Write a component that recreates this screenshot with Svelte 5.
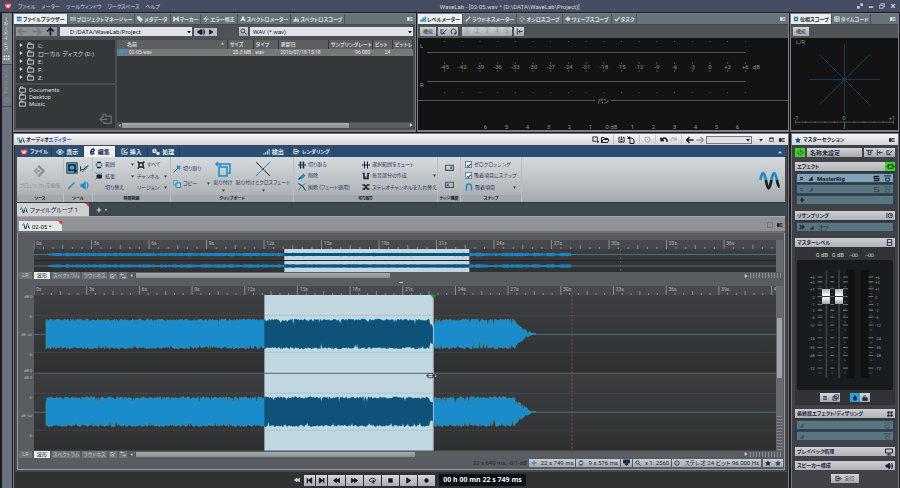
<script lang="ts">
  type Part = { d: string; c?: string; f?: string; w?: number };

  const BLUE = "#1a8ccc";
  const INK = "#1b1f24";

  const icons: Record<string, Part[]> = {
    logo: [
      { d: "M1 2 15 1 13 14 3 15Z", c: "none", f: "#c9283c" },
      { d: "M3 5l3 6 2-6 2 6 3-7", c: "#fff", w: 2 },
    ],
    bars: [{ d: "M2 3.5h13M2 8h13M2 12.5h13", c: "#1b6f9c", w: 3 }],
    grid: [{ d: "M1 4.5h14M1 10.5h14", w: 4 }, { d: "M5.5 1v14M10.5 1v14", c: "#5d676f", w: 1.5 }],
    tag: [{ d: "M1 2h6l8 7-5 6-9-8Z", f: "currentColor" }],
    marker: [{ d: "M2 1v14M14 1v14", w: 3 }, { d: "M3 3l5 5-5 5ZM13 3 8 8l5 5Z", f: "currentColor" }],
    bolt: [{ d: "M10 0 4 8h7L6 16M1 8h14" }],
    peak: [{ d: "M2 14 8 2l6 12M5 12l3-7 3 7", w: 3 }],
    columns: [{ d: "M3 15V8M7 15V3M11 15V6M15 15V9", w: 3 }],
    signal: [{ d: "M2 15v-3M6 15V9M10 15V6M14 15V2" }],
    blueColumns: [{ d: "M2 15v-5M6 15V7M10 15V4M14 15V1", c: "#1b7fb4", w: 3 }],
    pen: [{ d: "M2 14 12 4M11 2l3 3", w: 3 }],
    scope: [{ d: "M8 1v4M8 11v4M1 8h4M11 8h4", w: 3 }],
    wavescope: [{ d: "M1 8h14M5 4v8M8 2v12M11 4v8", w: 3 }],
    check: [{ d: "M2 8l4 5 9-11", w: 3 }],
    phase: [{ d: "M4 2 8 5 12 2M14 4l-3 4 3 4M12 14l-4-3-4 3M2 12l3-4-3-4", c: "#1b6f9c", w: 3 }],
    clock: [{ d: "M2 2h12v12H2ZM2 6h12M2 10h12M6 2v12" }],
    menu: [{ d: "M1 4h5v8H1Z", f: "currentColor" }, { d: "M8 4h7M8 8h7M8 12h7" }],
    back: [{ d: "M15 8H2M7 2 1 8l6 6", w: 3 }],
    forward: [{ d: "M1 8h13M9 2l6 6-6 6", w: 3 }],
    up: [{ d: "M8 15V2M2 8l6-6 6 6", w: 3 }],
    speaker: [{ d: "M2 6h3l4-4v12L5 10H2Z", f: "currentColor" }, { d: "M11 5q3 3 0 6M13 2q5 6 0 12" }],
    play: [{ d: "M4 2 13 8 4 14Z", f: "currentColor" }],
    search: [{ d: "M11 6.5a4.500 4.500 0 1 1-9 0a4.500 4.500 0 1 1 9 0M10 10l5 5" }],
    folder: [{ d: "M1 5h14v9H1ZM3 5V2h5l2 3" }],
    folderBack: [{ d: "M5 7V3h3l1 2h6v9H6v-2M10 9H1M4 6 1 9l3 3", w: 1.5 }],
    wave: [
      { d: "M1 8Q3-2 5 8M9 8q2-10 4 0", c: BLUE },
      { d: "M5 8q2 12 4 0M13 8q1 5 2 5", c: INK },
    ],
    fileWave: [{ d: "M1 12Q2 0 5 6t3 4q1-9 4-8t3 12", c: "#2a9adf", w: 3 }],
    eye: [{ d: "M1 8q7-9 14 0q-7 9-14 0" }, { d: "M6 8a2 2 0 1 0 4 0a2 2 0 1 0-4 0", f: "currentColor" }],
    edit: [{ d: "M4 9q9 0 8-5-2-4-7 1-3 9 1 9 3 0 6-3", w: 3 }],
    insert: [{ d: "M8 2H2v12h12V8M15 1 7 9M7 4v6h6" }],
    gears: [
      { d: "M2 6a3 3 0 1 0 6 0a3 3 0 1 0-6 0", w: 3 },
      { d: "M10 11a2 2 0 1 0 4 0a2 2 0 1 0-4 0", w: 3 },
    ],
    render: [{ d: "M2 3h7l5 5-5 5H2Z" }, { d: "M4 8h8", w: 3 }],
    source: [{ d: "M7 1 5 3l5 5-5 5 2 2 7-7Z", c: "none", f: "currentColor" }, { d: "M5 5 2 8l3 3M5 8h3" }],
    select: [{ d: "M1 1h14v14H1Z", c: INK, f: "#4aa5dc", w: 1 }, { d: "M4 4h8v7H4ZM11 14l3-3", c: INK }],
    envelope: [{ d: "M1 4v9M1 11q6-1 8-4t6-4", c: "#2c3f50" }, { d: "M4 14l9-8", c: BLUE }],
    pencil: [{ d: "M2 14 13 3", c: BLUE, w: 3 }, { d: "M1 15l3-3", c: INK }],
    listen: [{ d: "M2 6h3l4-4v12L5 10H2Z", c: BLUE, f: BLUE }, { d: "M12 3q4 5 0 10", c: BLUE }],
    range: [{ d: "M4 3h8M4 13h8", c: INK, w: 3 }, { d: "M3 5v6M13 5v6", c: BLUE, w: 3 }],
    extend: [{ d: "M4 6h9v6H4Z", c: INK, f: INK }, { d: "M1 1l4 4M15 1l-4 4M1 15l4-4M8 1v3", c: BLUE }],
    all: [{ d: "M4 4h8v8H4Z", c: INK, w: 3 }, { d: "M1 2h3M12 2h3M1 14h3M12 14h3", c: INK, w: 3 }],
    knife: [{ d: "M1 15 10 6", c: "#2b6f9b" }, { d: "M8 2l6 6M10 6l4-4", c: BLUE, w: 4 }],
    copy: [{ d: "M1 1h8v9H1Z", c: "#5a9fc4" }, { d: "M6 6h9v9H6Z", c: BLUE, f: "#c7ced1" }],
    paste: [{ d: "M5 5V3h10v9h-2M3 1 1 3l2 2M1 3h5", c: BLUE, w: 1.5 }, { d: "M4 6h8v9H4Z", c: BLUE, w: 1.5 }],
    cross: [{ d: "M1 1 15 15", c: INK, w: 1 }, { d: "M15 1 8 8M1 15l7-7", c: BLUE, w: 1 }, { d: "M8 8l7-7", c: BLUE, w: 1 }],
    crossSmall: [{ d: "M1 1q10 4 14 14", c: INK }, { d: "M15 1Q5 5 1 15", c: BLUE }],
    trim: [{ d: "M5 1v14M11 1v14", c: INK, w: 3 }, { d: "M0 8h5M11 8h5", c: BLUE, w: 4 }, { d: "M5 8h6", c: INK }],
    eraser: [{ d: "M5 13 13 5", c: BLUE, w: 6 }, { d: "M1 15l4-4", c: "#0f5279", w: 3 }],
    mute: [{ d: "M5 1v14M11 1v14M0 8h16", c: INK }, { d: "M6 8h4", c: BLUE, w: 4 }],
    silence: [{ d: "M1 3h3v10h8V3h3", c: INK, w: 3 }, { d: "M6 10h4", c: BLUE, w: 3 }],
    swap: [{ d: "M1 4h4l6 8h4M1 12h4l2-3M9 6l2-2h4", c: INK, w: 3 }],
    nudgeRight: [{ d: "M1 4h14v9H1Z", c: "#50575d" }, { d: "M10 7h2v3h-2Z", c: BLUE, f: BLUE }],
    nudgeLeft: [{ d: "M1 4h14v9H1Z", c: "#50575d" }, { d: "M4 7h2v3H4Z", c: BLUE, f: BLUE }],
    magnet: [{ d: "M3 15V8q0-6 5-6t5 6v7", c: BLUE, w: 3 }],
    newFile: [{ d: "M2 2h10v9M9 12H2V2M13 10v6M10 13h6" }],
    open: [{ d: "M1 13V3h5l1 2h6v2M1 13l3-6h12l-3 6Z" }],
    save: [{ d: "M2 3h3M11 3h3v11H2V3M8 1v8M5 6l3 3 3-3M5 12h6" }],
    saveAs: [{ d: "M6 4h4l4 4v7H6ZM1 1l4 4M5 1v4H1" }],
    disc: [{ d: "M2 8a6 6 0 1 0 12 0a6 6 0 1 0-12 0M7 8h2" }],
    undo: [{ d: "M2 3v6h6M3 8q6-8 11 0v4", w: 3 }],
    redo: [{ d: "M14 3v6H8M13 8Q7 0 2 8v4", w: 2 }],
    down: [{ d: "M3 5h10L8 12Z", c: "none", f: "currentColor" }],
    rollup: [{ d: "M3 11h10L8 5Z", c: "none", f: "currentColor" }],
    box: [{ d: "M2 3h12v11H2Z" }, { d: "M2 4h12", w: 3 }],
    minimise: [{ d: "M2 11h12", w: 4 }],
    restore: [{ d: "M5 5V2h10v8h-3M1 6h10v8H1Z" }],
    close: [{ d: "M3 3l10 10M13 3 3 13", w: 3 }],
    expand: [{ d: "M10 2h5v5h-5ZM1 9h5v5H1Z", f: "currentColor" }],
    star: [{ d: "M8 0l2 5 6 1-4 4 1 6-5-3-5 3 1-6-4-4 6-1Z", c: "none", f: "currentColor" }],
    blueStar: [{ d: "M8 0l2 5 6 1-4 4 1 6-5-3-5 3 1-6-4-4 6-1Z", c: "none", f: "#16507c" }],
    power: [{ d: "M8 1v7M4 4q-4 5 0 8 4 3 8 0 4-3 0-8" }],
    reset: [{ d: "M5 14Q0 9 4 4t9 1q3 4-1 9M9 13l4 1 1-4" }],
    bypass: [{ d: "M0 3h16M5 7h6v6H5ZM2 3l4 4M14 3l-4 4" }],
    bypassBox: [{ d: "M0 2h16M4 7h8v7H4Z" }],
    insertPoint: [{ d: "M3 1v14M15 8H6M10 4 6 8l4 4" }],
    options: [{ d: "M11 13H2V4h6M5 8l3 3 7-8" }],
    loopFx: [{ d: "M0 8h4M12 8h4M4 5h8v6H4Z" }],
    equals: [{ d: "M3 5h10M3 11h10", w: 3 }],
    ramp: [{ d: "M1 15 15 1v14Z", c: "none", f: "currentColor" }],
    solo: [{ d: "M14 3H3v5h10v5H2", w: 3 }],
    plus: [{ d: "M8 2v12M2 8h12", w: 3 }],
    resample: [{ d: "M1 3h4l4 5-4 5H1l4-5ZM8 3h3l4 5-4 5H8", f: "currentColor" }],
    timer: [{ d: "M2 2v12M5 8a5 5 0 1 0 10 0a5 5 0 1 0-10 0M10 5v3h3" }],
    linkH: [{ d: "M3 1h10v14H3ZM3 8h10" }],
    windows: [{ d: "M6 2h9v8H6ZM2 6h9v8H2Z" }],
    flame: [{ d: "M8 1q8 8 3 13H5Q0 9 8 1", f: "currentColor" }],
    lock: [{ d: "M2 7h12v8H2Z", f: "currentColor" }, { d: "M5 7V2h5" }],
    four: [{ d: "M2 2h4v4H2ZM10 2h4v4h-4ZM2 10h4v4H2ZM10 10h4v4h-4Z", f: "currentColor" }],
    screen: [{ d: "M1 2h14v8H1ZM8 10v4M4 14h8" }],
    toStart: [{ d: "M3 2v12", w: 3 }, { d: "M13 2 5 8l8 6Z", f: "currentColor" }],
    toEnd: [{ d: "M13 2v12", w: 3 }, { d: "M3 2l8 6-8 6Z", f: "currentColor" }],
    rewind: [{ d: "M8 3 1 8l7 5ZM15 3 8 8l7 5Z", f: "currentColor" }],
    fast: [{ d: "M1 3l7 5-7 5ZM8 3l7 5-7 5Z", f: "currentColor" }],
    loop: [{ d: "M4 11Q0 10 1 7q1-4 7-4t7 4q0 4-5 4M10 7v8l-4-4Z" }],
    stop: [{ d: "M3 3h10v10H3Z", c: "none", f: "currentColor" }],
    record: [{ d: "M3 8a5 5 0 1 0 10 0a5 5 0 1 0-10 0", c: "none", f: "currentColor" }],
    caret: [{ d: "M8 1v14M1 8h14", c: BLUE, w: 3 }],
    ring: [{ d: "M4 3h8M4 13h8", c: "#234", w: 3 }, { d: "M3 4v8M13 4v8", c: BLUE, w: 3 }],
    screenDown: [{ d: "M1 2h14v7H1ZM4 11h8l-4 4Z", f: "currentColor" }],
    updown: [{ d: "M1 4h9M4 1 1 4l3 3M15 12H6M12 9l3 3-3 3" }],
    left: [{ d: "M11 3v10L5 8Z", c: "none", f: "currentColor" }],
  };

  const fileTabs = [
    ["bars", "ファイルブラウザー"],
    ["grid", "プロジェクトマネージャー"],
    ["tag", "メタデータ"],
    ["marker", "マーカー"],
    ["bolt", "エラー修正"],
    ["peak", "スペクトロメーター"],
    ["columns", "スペクトロスコープ"],
  ];
  const meterTabs = [
    ["blueColumns", "レベルメーター"],
    ["pen", "ラウドネスメーター"],
    ["scope", "オシロスコープ"],
    ["wavescope", "ウェーブスコープ"],
    ["check", "タスク"],
  ];
  const scopeTabs = [
    ["phase", "位相スコープ"],
    ["clock", "タイムコード"],
  ];

  const drives = ["C:", "ローカル ディスク (D:)", "E:", "F:", "Z:"];
  const places = ["Documents", "Desktop", "Music"];
  const levels = Array.from({ length: 18 }, (_, i) => i * 3 - 45);
  const pans = [6, 5, 4, 3, 2, 1, 0, 1, 2, 3, 4, 5, 6];

  const CENTERS = [39, 117];

  function makeNoise(seed: number) {
    let s = seed;
    return () => {
      s = (s * 16807) % 2147483647;
      return s / 2147483647;
    };
  }

  // level of the clip at a pixel of the track
  function envelope(x: number) {
    if (x > 482) return Math.max(0.3, 13 * Math.pow((503 - x) / 21, 1.3));
    if (x > 396 && x < 402) return 10;
    return 15;
  }

  function wavePath(center: number, from: number, to: number, seed: number) {
    const rnd = makeNoise(seed);
    const top: string[] = [];
    const bottom: string[] = [];
    for (let x = 12; x <= 503; x++) {
      const deep = x > 400 ? 9 : 5;
      const chance = x > 400 ? 0.14 : 0.1;
      const env = envelope(x);
      const dip = rnd() < chance ? rnd() * deep : 0;
      const dip2 = rnd() < chance ? rnd() * deep : 0;
      const a = Math.max(0.3, env - dip - rnd() * 2);
      const b = Math.max(0.3, env - dip2 - rnd() * 2);
      if (x < from || x > to) continue;
      top.push(`${x} ${(center - a).toFixed(1)}`);
      bottom.unshift(`${x} ${(center + b).toFixed(1)}`);
    }
    return `M${top.join("L")}L${bottom.join("L")}Z`;
  }

  const waves = CENTERS.map((c, i) => ({
    full: wavePath(c, 12, 503, 77 + i * 5),
    selected: wavePath(c, 231, 400, 77 + i * 5),
  }));

  function thinPath(center: number) {
    const rnd = makeNoise(31);
    let top = "";
    let bottom = "";
    for (let x = 15; x < 544; x += 2) {
      const a = 1 + rnd() * 0.8;
      top += `L${x} ${(center - a).toFixed(1)}`;
      bottom = `L${x} ${(center + a).toFixed(1)}` + bottom;
    }
    return `M14 ${center}${top}${bottom}Z`;
  }

  const dbMarks: [string, number][] = [
    ["dB 0", 2],
    ["-6", 14],
    ["dB -∞", 25],
    ["-6", 37],
    ["dB 0", 47],
    ["dB 0", 51],
    ["-6", 63],
    ["dB -∞", 74],
    ["-6", 86],
    ["dB 0", 97],
  ];

  const faderMarks: [string, number][] = [
    ["+6", 16], ["+3", 21], ["+1", 28], ["0", 36], ["-1", 44], ["-2", 50], ["-6", 57],
    ["-12", 65], ["-24", 78], ["-36", 88], ["-48", 96], ["-72", 109],
  ];

  const transport = ["toStart", "toEnd", "rewind", "fast", "loop", "stop", "play", "record"];

  let leftGain = $state(79);
  let rightGain = $state(79);
  let zeroCross = $state(true);
  let snapItems = $state(true);
</script>

{#snippet icon(name: string, size = 7)}
  <svg class="icon" width={size} height={size} viewBox="0 0 16 16" aria-hidden="true">
    {#each icons[name] as p}
      <path d={p.d} stroke={p.c ?? "currentColor"} fill={p.f ?? "none"} stroke-width={p.w ?? 2} />
    {/each}
  </svg>
{/snippet}

{#snippet tabs(items: string[][])}
  <nav class="tabs">
    {#each items as [name, label], i}
      <button class="tab" class:active={i === 0}>{@render icon(name, 6)}{label}</button>
    {/each}
    <button class="corner" aria-label="menu">{@render icon("menu", 6)}</button>
  </nav>
{/snippet}

{#snippet ruler(step: number, count: number)}
  <svg class="ruler">
    {#each Array(count * 6) as _, i}
      <line
        x1="{(i * step) / 6}%" x2="{(i * step) / 6}%"
        y1={i % 6 === 0 ? 0 : i % 3 === 0 ? 5 : 7} y2="9"
      />
    {/each}
    {#each Array(count) as _, i}
      <text x="{i * step + 0.3}%" y="5">{i * 3}s</text>
    {/each}
  </svg>
{/snippet}

{#snippet viewBar(thumb: number)}
  <div class="view-bar">
    <button class="view lr">LR</button>
    <button class="view on">波形</button>
    <button class="view">スペクトラム</button>
    <button class="view">ラウドネス</button>
    <button class="view" aria-label="options">{@render icon("options", 6)}</button>
    <button class="view" aria-label="channels">{@render icon("updown", 6)}</button>
    {@render icon("left", 5)}
    <div class="h-track"><div class="h-thumb" style="width: {thumb}%"></div></div>
    {@render icon("play", 4)}
    <div class="wheel"></div>
  </div>
{/snippet}

<div class="app">
  <header class="title-bar">
    {@render icon("logo", 8)}
    <nav>
      {#each ["ファイル", "メーター", "ツールウィンドウ", "ワークスペース", "ヘルプ"] as item}
        <button>{item}</button>
      {/each}
    </nav>
    <h1>WaveLab - [02-05.wav * (D:\DATA\WaveLab\Project)]</h1>
    <div class="window-buttons">
      {#each ["expand", "minimise", "restore", "close"] as name}
        <button aria-label={name}>{@render icon(name, 6)}</button>
      {/each}
    </div>
  </header>

  <aside class="rail">
    <button class="rail-tab lit">{@render icon("grid", 7)}ビットメーター</button>
    <button class="rail-tab">{@render icon("disc", 6)}プラグイン</button>
  </aside>

  <div class="tools">
    <section class="panel">
      {@render tabs(fileTabs)}
      <div class="tool-row browser-row">
        <div class="history">
          <button class="dim" aria-label="back">{@render icon("back", 9)}</button>
          <button class="dim" aria-label="forward">{@render icon("forward", 9)}</button>
          <button aria-label="up">{@render icon("up", 9)}</button>
        </div>
        <div class="combo path">
          <select aria-label="folder"><option>D:/DATA/WaveLab/Project</option></select>
          {@render icon("down", 6)}
        </div>
        <div class="listen">
          <button aria-label="listen">{@render icon("speaker", 8)}</button>
          <button aria-label="play">{@render icon("play", 6)}</button>
        </div>
        <button class="light search" aria-label="search">{@render icon("search", 7)}</button>
        <div class="combo filter">
          <select aria-label="file type"><option>WAV (*.wav)</option></select>
          {@render icon("down", 6)}
        </div>
      </div>
      <div class="browser">
        <div class="trees">
          <ul class="tree">
            {#each drives as drive}
              <li>{@render icon("play", 4)}{@render icon("folder", 7)}{drive}</li>
            {/each}
          </ul>
          <div class="places">
            <ul class="tree">
              {#each places as place}
                <li>{@render icon("folder", 7)}{place}</li>
              {/each}
            </ul>
            <button class="go-back" aria-label="parent folder">{@render icon("folderBack", 13)}</button>
          </div>
        </div>
        <div class="files">
          <table>
            <thead>
              <tr>
                <th class="name">名前 {@render icon("rollup", 5)}</th>
                <th class="size">サイズ</th>
                <th class="type">タイプ</th>
                <th class="date">更新日</th>
                <th class="rate">サンプリングレート</th>
                <th class="bit">ビット</th>
                <th class="bit">ビットレ</th>
              </tr>
            </thead>
            <tbody>
              <tr>
                <td class="first">{@render icon("fileWave", 7)}02-05.wav</td>
                <td class="num">20.3 MB</td>
                <td>wav</td>
                <td>2016/07/18 15:18</td>
                <td class="num">96 000</td>
                <td class="num">24</td>
                <td></td>
              </tr>
            </tbody>
          </table>
          <div class="file-scroll">
            {@render icon("left", 5)}
            <div class="h-track"><div class="h-thumb" style="width: 79%"></div></div>
            {@render icon("play", 4)}
          </div>
        </div>
      </div>
    </section>

    <section class="panel">
      {@render tabs(meterTabs)}
      <div class="tool-row">
        <button class="light">機能</button>
        <div class="cluster">
          <button class="light" aria-label="options">{@render icon("options", 7)}</button>
          <button class="light" aria-label="reset">{@render icon("reset", 7)}</button>
        </div>
        <div class="cluster presets">
          {#each ["①", "②", "③", "④", "⑤"] as preset}
            <button class="light" disabled>{preset}</button>
          {/each}
          <button class="light" aria-label="insert point">{@render icon("insertPoint", 7)}</button>
        </div>
      </div>
      <svg class="scope-view">
        <text x="2" y="10">L</text>
        <text x="2" y="49">R</text>
        <line x1="2.500%" x2="88.500%" y1="14.500" y2="14.500" />
        <line x1="2.500%" x2="88.500%" y1="43.500" y2="43.500" />
        <line x1="0" x2="48%" y1="62.500" y2="62.500" />
        <line x1="52%" x2="100%" y1="62.500" y2="62.500" />
        {#each levels as level, i}
          {@const x = `${7.2 + i * 4.780}%`}
          <g class="ticks">
            <line x1={x} x2={x} y1="3" y2="4" />
            <line x1={x} x2={x} y1="24" y2="26" />
            <line x1={x} x2={x} y1="32" y2="34" />
            <line x1={x} x2={x} y1="54" y2="55" />
          </g>
          <text class="mid" {x} y="31">{level > 0 ? `+${level}` : level}</text>
        {/each}
        <text x="90.500%" y="31">dB</text>
        <text class="mid pan" x="50%" y="65">パン</text>
        {#each pans as pan, i}
          <text class="mid" x="{18.2 + i * 5.680}%" y="91">{pan === 0 ? "0 dB" : pan}</text>
        {/each}
      </svg>
    </section>

    <section class="panel">
      {@render tabs(scopeTabs)}
      <div class="tool-row"><button class="light">機能</button></div>
      <svg class="scope-view" viewBox="0 0 107 94">
        <text x="4" y="6">L/R</text>
        <g class="cross">
          <path d="M53.500 6v72M17 42.500h73M28 17l51 51M79 17 28 68" />
        </g>
        <text class="mid" x="4" y="84">-1</text>
        <text class="mid" x="53" y="84">0</text>
        <text class="mid" x="102" y="84">+1</text>
        <path class="scale" d="M3 86h101M3.500 84v4M13.500 85v2M23.500 85v2M33.500 85v2M43.500 85v2M63.500 85v2M73.500 85v2M83.500 85v2M93.500 85v2M103.500 84v4" />
        <path d="M53.500 86v7" stroke="#0f9a12" />
      </svg>
    </section>
  </div>

  <main class="editor">
    <div class="editor-title">
      {@render icon("wave", 8)}<h2>オーディオ<span>エディター</span></h2>
      <div class="actions">
        <button aria-label="new">{@render icon("newFile", 7)}</button>
        <button aria-label="open">{@render icon("open", 8)}</button>
        <i></i>
        <button aria-label="save">{@render icon("save", 7)}</button>
        <button aria-label="save as">{@render icon("saveAs", 8)}</button>
        <i></i>
        <button class="dim" aria-label="disc">{@render icon("disc", 7)}</button>
        <i></i>
        <button aria-label="undo">{@render icon("undo", 8)}</button>
        <button class="dim" aria-label="redo">{@render icon("redo", 7)}</button>
        <i></i>
        <button aria-label="previous">{@render icon("back", 8)}</button>
        <button class="dim" aria-label="next">{@render icon("forward", 8)}</button>
      </div>
      <div class="combo jump">
        <select aria-label="history"><option></option></select>
        {@render icon("down", 6)}
      </div>
      <div class="layout">
        <button aria-label="more">{@render icon("down", 6)}</button>
        <button aria-label="maximise">{@render icon("box", 5)}</button>
        <button aria-label="menu">{@render icon("menu", 6)}</button>
      </div>
    </div>

    <div class="frame">
      <nav class="ribbon-tabs">
        <button>{@render icon("logo", 8)}ファイル</button>
        <button>{@render icon("eye", 8)}表示</button>
        <button class="active">{@render icon("edit", 7)}編集</button>
        <button>{@render icon("insert", 7)}挿入</button>
        <button>{@render icon("gears", 8)}処理</button>
        <button class="detect">{@render icon("signal", 7)}検出</button>
        <button>{@render icon("render", 7)}レンダリング</button>
        <button class="fold" aria-label="fold">{@render icon("rollup", 6)}</button>
      </nav>

      <div class="ribbon">
        <section>
          <div class="body big off">
            <button>{@render icon("source", 14)}プロジェクトを編集</button>
          </div>
          <h3>ソース</h3>
        </section>
        <section>
          <div class="body two-col">
            <button aria-label="select">{@render icon("select", 12)}</button>
            <button aria-label="envelope">{@render icon("envelope", 9)}</button>
            <button aria-label="pencil">{@render icon("pencil", 8)}</button>
            <button aria-label="listen">{@render icon("listen", 9)}</button>
          </div>
          <h3>ツール</h3>
        </section>
        <section>
          <div class="body range">
            <button>{@render icon("range", 8)}範囲</button>
            <button>{@render icon("down", 5)}{@render icon("all", 8)}すべて</button>
            <button>{@render icon("extend", 8)}拡張</button>
            <button>{@render icon("down", 5)}チャンネル<b>{@render icon("down", 5)}</b></button>
            <button class="inset">切り替え</button>
            <button class="inset-less">リージョン<b>{@render icon("down", 5)}</b></button>
          </div>
          <h3>時間範囲</h3>
        </section>
        <section>
          <div class="body clip">
            <div class="stack">
              <button>{@render icon("knife", 8)}切り取り</button>
              <button>{@render icon("copy", 8)}コピー<b>{@render icon("down", 5)}</b></button>
            </div>
            <button class="tall">{@render icon("paste", 16)}貼り付け{@render icon("down", 5)}</button>
            <button class="tall">{@render icon("cross", 16)}貼り付けとクロスフェード{@render icon("down", 5)}</button>
          </div>
          <h3>クリップボード</h3>
        </section>
        <section>
          <div class="body cutting">
            <button>{@render icon("trim", 8)}切り取る</button>
            <button>{@render icon("mute", 8)}選択範囲をミュート</button>
            <button>{@render icon("eraser", 8)}削除</button>
            <button>{@render icon("silence", 8)}無音部分の作成<b>{@render icon("down", 5)}</b></button>
            <button>{@render icon("crossSmall", 8)}削除 (フェード適用)</button>
            <button>{@render icon("swap", 8)}ステレオチャンネルを入れ替え</button>
          </div>
          <h3>切り取り</h3>
        </section>
        <section>
          <div class="body big nudge">
            <button aria-label="nudge right">{@render icon("nudgeRight", 9)}</button>
            <button aria-label="nudge left">{@render icon("nudgeLeft", 9)}</button>
          </div>
          <h3>ナッジ機能</h3>
        </section>
        <section>
          <div class="body snap">
            <label><input type="checkbox" bind:checked={zeroCross} />ゼロクロッシング</label>
            <label><input type="checkbox" bind:checked={snapItems} />吸着項目にスナップ</label>
            <button>{@render icon("magnet", 8)}吸着項目<b>{@render icon("down", 5)}</b></button>
          </div>
          <h3>スナップ</h3>
        </section>
        <div class="brand">{@render icon("wave", 22)}</div>
      </div>

      <div class="group-row">
        <button class="group-tab">{@render icon("wave", 8)}ファイルグループ 1</button>
        <button class="add">{@render icon("plus", 6)}{@render icon("down", 4)}</button>
      </div>

      <div class="doc-row">
        <button class="doc-tab">{@render icon("wave", 8)}02-05 *</button>
        <div class="doc-tools">
          <button class="square" aria-label="colour"></button>
          <button aria-label="menu">{@render icon("menu", 6)}</button>
        </div>
      </div>

      <div class="montage">
        <div class="overview">
          <div class="gutter"></div>
          <div class="lane">
            {@render ruler(7.750, 13)}
            <svg class="thin" viewBox="0 0 750 23" preserveAspectRatio="none">
              <rect width="750" height="23" fill="url(#lane)" />
              <rect x="253" width="187" height="23" fill="#c1d8e2" />
              <path d="M0 11.500h750" stroke="#222426" />
              <path class="zero" d="M0 5.500h750M0 17h750" />
              <path d={thinPath(5.5) + thinPath(17)} fill="#1b82bb" />
              <path d="M253 5.500h187M253 17h187" stroke="#0f5279" stroke-width="3" />
              <path d="M593 0v23" stroke="#8d4a55" stroke-dasharray="2 2" />
            </svg>
          </div>
          <div class="v-bar"></div>
        </div>
        {@render viewBar(42)}

        <div class="grip"></div>

        <div class="detail">
          <svg class="gutter db">
            {#each dbMarks as [label, y]}
              <text x="14" y="{y}%" dy="9">{label}-</text>
            {/each}
          </svg>
          <div class="lane">
            {@render ruler(7.100, 15)}
            <svg class="wave" viewBox="0 0 744 156" preserveAspectRatio="none">
              <defs>
                <linearGradient id="lane" x2="0" y2="1">
                  <stop offset="0" stop-color="#3d3e41" />
                  <stop offset="1" stop-color="#2f3032" />
                </linearGradient>
              </defs>
              <rect width="744" height="78" fill="url(#lane)" />
              <rect y="78" width="744" height="78" fill="url(#lane)" />
              <rect x="231" width="169" height="156" fill="#c1d8e2" />
              <path d="M0 20.500h744M0 57.500h744M0 98.500h744M0 135.500h744" stroke="#777" stroke-opacity=".2" />
              <path d="M0 78.500h744" stroke="#5c5e61" />
              <path class="zero" d="M0 39.500h744M0 117.500h744" />
              {#each waves as wave}
                <path d={wave.full} fill="#1a8ccc" stroke="#3c93a6" stroke-width=".6" />
                <path d={wave.selected} fill="#0f5279" />
              {/each}
              <path d="M539.500 0v156" stroke="#7c5560" stroke-dasharray="2 2" />
              <path d="M400.500 0v156" stroke="#dfe9ee" stroke-opacity=".6" />
              <path d="M398 0h5l-2.500 4Z" fill="#1da51d" />
              <path d="M393 81h11M402 79l3 2-3 2M395 79h5v4h-5Z" fill="#fff" stroke="#223" stroke-width=".8" />
            </svg>
          </div>
          <div class="v-bar">
            <div class="v-thumb"></div>
            <div class="v-wheel"></div>
          </div>
        </div>
        {@render viewBar(46)}

        <footer class="status">
          <span class="cursor">22 s 640 ms, -0.1 dB</span>
          <div class="chips">
            <button>{@render icon("caret", 6)}<span>22 s 749 ms</span></button>
            <button>{@render icon("ring", 6)}<span>9 s 576 ms</span></button>
            <button aria-label="view">{@render icon("screenDown", 7)}</button>
            <button>{@render icon("search", 6)}<span>x 1: 2560</span></button>
            <button>{@render icon("disc", 6)}<span>ステレオ 24 ビット 96 000 Hz</span></button>
          </div>
          <div class="chips">
            <button aria-label="favourites">{@render icon("star", 6)}{@render icon("blueStar", 6)}</button>
          </div>
        </footer>
      </div>
    </div>

    <div class="transport">
      {@render icon("rewind", 6)}
      <div class="keys">
        {#each transport as name, i}
          <button class:narrow={i < 2} aria-label={name}>{@render icon(name, 7)}</button>
        {/each}
      </div>
      <output>00 h 00 mn 22 s 749 ms</output>
    </div>
  </main>

  <aside class="master">
    <div class="master-title">
      {@render icon("blueStar", 6)}<h2>マスターセクション</h2>{@render icon("menu", 6)}
    </div>
    <div class="preset">
      <button class="green" aria-label="power">{@render icon("power", 7)}</button>
      <button class="light preset-name">名称未設定</button>
      <div class="light trio">
        {@render icon("bypass", 7)}{@render icon("insertPoint", 7)}{@render icon("options", 7)}
      </div>
    </div>

    <h3 class="bar">エフェクト <button class="green" aria-label="effects">{@render icon("loopFx", 9)}</button></h3>
    <div class="slots">
      <div class="slot lit">{@render icon("equals", 5)}{@render icon("ramp", 5)}<b>MasterRig</b>{@render icon("solo", 7)}{@render icon("bypassBox", 7)}</div>
      <div class="slot faint">{@render icon("equals", 5)}{@render icon("ramp", 5)}<b></b>{@render icon("solo", 7)}{@render icon("bypassBox", 7)}</div>
      <div class="slot">{@render icon("plus", 6)}</div>
    </div>

    <h3 class="bar">リサンプリング {@render icon("timer", 7)}</h3>
    <div class="slots">
      <div class="slot off">{@render icon("resample", 6)}{@render icon("ramp", 5)}<span>オフ</span></div>
    </div>

    <h3 class="bar">マスターレベル {@render icon("linkH", 7)}</h3>
    <div class="level">
      <div class="readout"><span>0 dB</span><span>0 dB</span><span>-∞</span><span>-∞</span></div>
      <div class="faders">
        <svg width="98" height="130" viewBox="0 0 98 130">
          <rect x="51" y="9" width="8" height="110" fill="#101112" />
          <rect x="65" y="9" width="8" height="110" fill="#101112" />
          <path d="M30 9v110M43 9v110" stroke="#3a3d40" stroke-width="2" />
          {#each faderMarks as [label, y]}
            <path d="M21 {y}h5M34 {y}h4M47 {y}h5M73 {y}h5" stroke="#74777a" />
            <path d="M22 {y + 5}h3M35 {y + 5}h2M48 {y + 5}h2M74 {y + 5}h3" stroke="#484b4e" />
            <text class="end" x="18" y={y + 2}>{label}</text>
            <text x="80" y={y + 2}>{label}</text>
          {/each}
        </svg>
        <div class="sliders">
          <input type="range" aria-label="left gain" bind:value={leftGain} />
          <input type="range" aria-label="right gain" bind:value={rightGain} />
        </div>
      </div>
      <div class="level-buttons">
        <div class="cluster">
          <button class="light" aria-label="link">{@render icon("equals", 6)}</button>
          <button class="light" aria-label="windows">{@render icon("windows", 7)}</button>
        </div>
        <div class="cluster">
          <button class="light blue" aria-label="clip">{@render icon("flame", 6)}</button>
          <button class="light" aria-label="lock">{@render icon("lock", 6)}</button>
        </div>
      </div>
    </div>

    <h3 class="bar">最終段エフェクト/ディザリング {@render icon("four", 6)}</h3>
    <div class="slots">
      <div class="slot faint">{@render icon("ramp", 5)}<b></b>{@render icon("bypassBox", 7)}</div>
      <div class="slot faint">{@render icon("ramp", 5)}<b></b>{@render icon("bypassBox", 7)}</div>
    </div>
    <h3 class="bar">プレイバック処理 {@render icon("screen", 8)}</h3>
    <h3 class="bar">スピーカー構成 {@render icon("speaker", 8)}</h3>
    <button class="light render">{@render icon("render", 7)}実行</button>
  </aside>
</div>

<style>
  :global(body) {
    margin: 0;
    background: #1d1b28;
  }

  .app {
    display: grid;
    grid-template-columns: 10px 1fr 109px;
    grid-template-rows: 13px 119px 1fr;
    column-gap: 1px;
    min-height: 100vh;
    box-sizing: border-box;
    padding: 0 1px 1px 2px;
    font: 5px/7px Roboto, "Noto Sans CJK JP", sans-serif;
    font-feature-settings: "palt";
    color: #d3d7da;
    white-space: nowrap;
  }

  .icon {
    flex: none;
    display: block;
  }

  button,
  select,
  input {
    display: flex;
    align-items: center;
    justify-content: center;
    gap: 2px;
    margin: 0;
    padding: 0;
    border: 0;
    background: none;
    color: inherit;
    font: inherit;
    font-feature-settings: inherit;
    white-space: nowrap;
  }

  h1,
  h2,
  h3,
  ul {
    margin: 0;
    padding: 0;
    font-size: inherit;
    list-style: none;
  }

  .title-bar {
    grid-column: 1 / -1;
    display: grid;
    grid-template-columns: 14px 4fr auto 3fr;
    align-items: center;
    margin: 0 -1px 1px -2px;
    padding: 0 4px;
    background: #454d62;
    color: #d5d8df;
    font-size: 6px;
  }

  .title-bar nav {
    display: flex;
    gap: 6px;
    font-size: 5px;
  }

  .title-bar h1 {
    font-weight: 400;
  }

  .window-buttons {
    display: flex;
    justify-content: flex-end;
    gap: 5px;
  }

  .rail {
    grid-row: 2 / 4;
    display: flex;
    flex-direction: column;
    gap: 1px;
    background: #69727a;
  }

  .rail-tab {
    writing-mode: vertical-rl;
    transform: rotate(180deg);
    gap: 3px;
    padding: 3px 0;
    border-top: 1px solid #454c52;
    color: #8c949b;
  }

  .rail-tab.lit {
    background: #7a838a;
    color: #e3e6e9;
  }

  .tools {
    grid-column: 2 / 4;
    display: grid;
    grid-template-columns: 403fr 372fr 109px;
    gap: 1px;
  }

  .panel {
    display: flex;
    flex-direction: column;
    min-width: 0;
    overflow: hidden;
    border: 1px solid #7b7f84;
    border-bottom-width: 2px;
    background: #505356;
  }

  .tabs {
    display: flex;
    height: 10px;
    background: #69727a;
    border-bottom: 1px solid #454a4f;
  }

  .tab {
    gap: 1px;
    padding: 0 2px;
    border-right: 1px solid #4c545b;
    color: #dde1e4;
    font-weight: 700;
  }

  .tab.active {
    background: #eceff0;
    color: #20262c;
  }

  .corner {
    margin-left: auto;
    padding-right: 2px;
    color: #dfe3e6;
  }

  .tool-row {
    display: flex;
    align-items: center;
    gap: 2px;
    height: 11px;
    padding: 1px 2px;
  }

  .light {
    min-height: 9px;
    padding: 0 3px;
    background: linear-gradient(#d2d5d8, #a6a9ad);
    color: #272d47;
  }

  .light:disabled {
    color: #85888c;
    font-size: 7px;
  }

  .cluster {
    display: flex;
  }

  .cluster .light {
    width: 10px;
    padding: 0;
  }

  .presets {
    margin-left: 2px;
  }

  .presets .light:last-child {
    margin-left: 2px;
  }

  .history,
  .listen {
    display: flex;
    gap: 5px;
    align-items: center;
    padding: 0 2px;
    background: #8d9194;
    color: #15193a;
  }

  .listen {
    gap: 3px;
    padding: 0 3px;
    background: #b9bcc0;
  }

  .dim {
    color: #75797d;
  }

  .search {
    margin-left: 20px;
    padding: 0 1px;
  }

  .combo {
    display: flex;
    align-items: center;
    height: 9px;
    background: #dfe1e6;
    color: #15193a;
  }

  .combo select {
    flex: 1;
    min-width: 0;
    appearance: none;
    padding-left: 3px;
    font-size: 6px;
    line-height: 9px;
  }

  .path {
    flex: 0 1 132px;
    margin-left: 1px;
  }

  .path select {
    padding-left: 10px;
  }

  .filter {
    flex: 1;
  }

  .browser {
    flex: 1;
    display: grid;
    grid-template-columns: 99px 1fr;
    gap: 2px;
    padding: 2px 2px;
    min-height: 0;
    background: #4b4e51;
  }

  .trees {
    display: flex;
    flex-direction: column;
    gap: 2px;
  }

  .tree {
    padding: 1px 3px;
    background: #35383b;
  }

  .trees > .tree {
    height: 41px;
  }

  .tree li {
    display: flex;
    align-items: center;
    gap: 3px;
    height: 7px;
    font-size: 6px;
  }

  .trees > .tree li {
    gap: 4px;
    height: 8px;
  }

  .places {
    flex: 1;
    display: flex;
    flex-direction: column;
    justify-content: space-between;
    background: #35383b;
  }

  .go-back {
    align-self: flex-end;
    padding: 0 3px 3px;
    color: #6b7074;
  }

  .files {
    display: flex;
    flex-direction: column;
    justify-content: space-between;
    min-width: 0;
    overflow: hidden;
    background: #35383b;
  }

  table {
    width: 100%;
    table-layout: fixed;
    border-collapse: collapse;
    line-height: 7px;
  }

  th {
    box-sizing: border-box;
    height: 9px;
    padding: 0 2px;
    overflow: hidden;
    border-right: 1px solid #35383b;
    background: #5d6063;
    text-align: left;
  }

  th .icon {
    float: right;
  }

  .name {
    width: 110px;
    padding-left: 10px;
  }

  .size {
    width: 26px;
  }

  .type {
    width: 25px;
  }

  .date {
    width: 50px;
  }

  .rate {
    width: 44px;
  }

  .bit {
    width: 20px;
  }

  td {
    height: 7px;
    padding: 0 2px;
    background: #777779;
    color: #e2e4e6;
  }

  .first {
    display: flex;
    align-items: center;
    gap: 3px;
  }

  .num {
    text-align: right;
  }

  .file-scroll {
    display: flex;
    align-items: center;
    height: 6px;
    background: #4b4f52;
  }

  .h-track {
    flex: 1;
    height: 5px;
    background: #5a5e61;
  }

  .h-thumb {
    height: 5px;
    background: linear-gradient(#a6abad, #8a9092);
  }

  .scope-view {
    flex: 1;
    width: 100%;
    min-height: 0;
    background: #131313;
  }

  .scope-view text {
    fill: #8d8f92;
    font-size: 6px;
  }

  .scope-view .mid {
    text-anchor: middle;
  }

  .scope-view .pan {
    fill: #b0b2b4;
  }

  .scope-view line,
  .scale {
    stroke: #55585a;
  }

  .ticks line {
    stroke: #4d4f52;
  }

  .cross path {
    fill: none;
    stroke: #1b3a5b;
  }

  .editor,
  .master {
    display: flex;
    flex-direction: column;
    min-width: 0;
    margin-top: 1px;
    border: 1px solid #74777b;
    background: #313133;
  }

  .editor-title,
  .master-title {
    display: flex;
    align-items: center;
    height: 11px;
    padding: 0 3px;
    background: linear-gradient(#f6f7fa, #cfd2d6);
    color: #181b22;
  }

  .editor-title h2 {
    flex: 1;
    margin-left: 1px;
  }

  .editor-title h2 span {
    color: #2b55b5;
  }

  .actions,
  .layout {
    display: flex;
    align-items: center;
    gap: 2px;
  }

  .actions i {
    width: 1px;
    height: 9px;
    margin: 0 2px;
    background: #c0c3c7;
  }

  .editor-title .dim {
    color: #9a9da1;
  }

  .jump {
    width: 44px;
    height: 6px;
    margin: 0 6px 0 2px;
    border: 1px solid #777b80;
  }

  .layout {
    gap: 5px;
  }

  .frame {
    flex: 1;
    display: flex;
    flex-direction: column;
    margin: 0 1px;
    border: 2px solid #45494d;
    border-top-width: 1px;
  }

  .ribbon-tabs {
    display: flex;
    height: 11px;
    background: #2a4e74;
    color: #e8edf2;
    font-size: 6px;
    font-weight: 700;
  }

  .ribbon-tabs button {
    width: 32px;
    border-right: 1px solid #244463;
  }

  .ribbon-tabs button:nth-child(1),
  .ribbon-tabs button:nth-child(7) {
    width: auto;
    padding: 0 3px;
    font-size: 5px;
  }

  .ribbon-tabs .active {
    background: #f1f3f4;
    color: #1e2b52;
  }

  .ribbon-tabs .detect {
    margin-left: 78px;
  }

  .ribbon-tabs .fold {
    width: 10px;
    margin-left: auto;
    border: 0;
  }

  .ribbon {
    display: grid;
    grid-template-columns: 47px 29px 78px 123px 144px 23px 61px 1fr;
    height: 45px;
    background: linear-gradient(#d7dadc, #a5abad);
    color: #2c3563;
  }

  .ribbon section {
    display: flex;
    flex-direction: column;
    min-width: 0;
    border-right: 1px solid #b9bec1;
  }

  .ribbon h3 {
    height: 7px;
    overflow: hidden;
    background: #a2a8ab;
    color: #14181d;
    font-size: 4px;
    text-align: center;
  }

  .body {
    flex: 1;
    display: grid;
    align-items: center;
    padding: 2px;
  }

  .body button,
  .body label {
    display: flex;
    align-items: center;
    justify-content: flex-start;
    gap: 2px;
  }

  .body b {
    margin-left: auto;
  }

  .body .tall,
  .big button {
    flex-direction: column;
    justify-content: center;
    gap: 4px;
  }

  .body .tall {
    gap: 2px;
    padding-top: 2px;
  }

  .off {
    color: #8c9396;
  }

  .two-col {
    grid-template-columns: 1fr 1fr;
    justify-items: center;
  }

  .range {
    grid-template-columns: 33px 1fr;
    column-gap: 2px;
  }

  .range .inset {
    padding-left: 10px;
  }

  .range .inset-less {
    padding-left: 7px;
  }

  .clip {
    grid-template-columns: 38px 24px 1fr;
  }

  .stack {
    display: grid;
    gap: 7px;
  }

  .cutting {
    grid-template-columns: 62px 1fr;
    padding: 2px 4px;
    column-gap: 2px;
  }

  .nudge {
    justify-items: center;
  }

  .snap {
    padding: 2px 4px;
  }

  input[type="checkbox"] {
    appearance: none;
    width: 7px;
    height: 7px;
    border: 1px solid #5d87a3;
    background: #eef3f5;
  }

  input[type="checkbox"]:checked::after {
    content: "";
    width: 3px;
    height: 1px;
    border: solid #17344a;
    border-width: 0 0 1px 1px;
    transform: rotate(-45deg);
  }

  .brand {
    display: flex;
    align-items: center;
    justify-content: flex-end;
    padding-right: 4px;
  }

  .group-row {
    display: flex;
    height: 13px;
    border-top: 1px solid #30373c;
    background: #3f484f;
  }

  .group-tab,
  .doc-tab {
    position: relative;
    padding: 0 11px 0 3px;
    background: #cdd0d2;
    color: #181b22;
    font-size: 6px;
  }

  .group-tab::after,
  .doc-tab::after {
    content: "";
    position: absolute;
    top: 0;
    right: 0;
    border: 2px solid #e8321a;
    border-bottom-color: transparent;
    border-left-color: transparent;
  }

  .add {
    padding: 0 7px;
    color: #d5d9dc;
  }

  .doc-row {
    display: flex;
    align-items: flex-end;
    justify-content: space-between;
    height: 14px;
    padding: 0 2px;
    border-bottom: 2px solid #6d7074;
    border-top: 1px solid #a5a7aa;
    background: #909295;
  }

  .doc-tab {
    height: 10px;
    background: #e3e6e7;
  }

  .doc-tools {
    display: flex;
    gap: 4px;
    padding-bottom: 3px;
    color: #1b1f24;
  }

  .square {
    width: 6px;
    height: 6px;
    border: 1px solid #74777a;
  }

  .montage {
    flex: 1;
    display: flex;
    flex-direction: column;
    padding: 7px 1px 1px;
    border: 1px solid #9a9da0;
    border-top: 0;
    background: #595c60;
  }

  .overview,
  .detail {
    display: grid;
    grid-template-columns: 15px 1fr 7px;
  }

  .detail {
    flex: 1;
    min-height: 160px;
  }

  .gutter {
    width: 15px;
    height: 100%;
  }

  .db text {
    fill: #b3b6b9;
    font-size: 4px;
    text-anchor: end;
  }

  .lane {
    display: flex;
    flex-direction: column;
    min-width: 0;
  }

  .ruler {
    width: 100%;
    height: 9px;
    background: #48494c;
  }

  .ruler line {
    stroke: #8b8d90;
  }

  .ruler text {
    fill: #b3b5b8;
    font-size: 5px;
  }

  .thin {
    width: 100%;
    height: 23px;
  }

  .wave {
    flex: 1;
    width: 100%;
    min-height: 0;
  }

  .zero {
    stroke: #3f7581;
  }

  .v-bar {
    display: flex;
    flex-direction: column;
    justify-content: space-between;
    padding: 32px 1px 1px;
    background: #66696d;
  }

  .overview .v-bar {
    padding: 0;
  }

  .v-thumb {
    height: 60px;
    background: #9ea3a6;
  }

  .v-wheel {
    height: 34px;
    background: repeating-linear-gradient(#85888b 0 1px, #5a5d60 1px 3px);
  }

  .view-bar {
    display: flex;
    align-items: center;
    gap: 2px;
    height: 7px;
  }

  .view {
    height: 7px;
    padding: 0 1px;
    background: #6c7379;
    color: #c3c7ca;
  }

  .view.lr {
    width: 13px;
  }

  .view.on {
    padding: 0 3px;
    background: #e6e8e9;
    color: #1b1f24;
  }

  .wheel {
    width: 33px;
    height: 5px;
    background: repeating-linear-gradient(90deg, #8f9295 0 1px, #5a5d60 1px 3px);
  }

  .grip {
    width: 4px;
    height: 1px;
    margin: 3px auto;
    background: #c9ccce;
  }

  .status {
    display: flex;
    align-items: center;
    justify-content: flex-end;
    gap: 2px;
    height: 10px;
    color: #1f2942;
    font-size: 6px;
  }

  .chips {
    display: flex;
    gap: 1px;
  }

  .chips button {
    height: 8px;
    gap: 4px;
    padding: 0 2px;
    background: linear-gradient(#c9ccd0, #a6a9ad);
  }

  .transport {
    display: flex;
    align-items: center;
    justify-content: center;
    gap: 4px;
    height: 17px;
    padding-left: 18px;
  }

  .keys {
    display: flex;
    gap: 1px;
  }

  .keys button {
    width: 17px;
    height: 11px;
    background: linear-gradient(#d3d5dc, #a9acb5);
    color: #14161c;
  }

  .keys .narrow {
    width: 11px;
  }

  output {
    padding: 0 4px;
    border-radius: 1px;
    background: #0b1117;
    color: #f2f4f6;
    font-family: "Noto Sans", sans-serif;
    font-size: 7px;
    font-weight: 700;
    line-height: 12px;
  }

  .master {
    grid-column: 3;
    margin-left: 1px;
    background: #404245;
  }

  .master-title {
    gap: 2px;
    margin-bottom: 3px;
  }

  .master-title h2 {
    flex: 1;
  }

  .preset {
    display: flex;
    gap: 2px;
    margin: 0 3px 5px;
  }

  .green {
    min-width: 10px;
    height: 9px;
    background: #3ed32c;
    color: #16420f;
  }

  .preset-name {
    flex: 1;
    justify-content: flex-start;
    font-size: 6px;
    font-weight: 700;
  }

  .trio {
    display: flex;
    align-items: center;
    gap: 3px;
    padding: 0 2px;
  }

  .bar {
    display: flex;
    align-items: center;
    justify-content: space-between;
    height: 9px;
    margin: 0 3px;
    padding: 0 2px;
    background: linear-gradient(#cdcfd2, #b0b2b5);
    color: #1c2140;
  }

  .bar .green {
    margin-right: -2px;
  }

  .slots {
    display: grid;
    gap: 1px;
    margin: 0 3px 6px;
    padding: 2px 1px 0;
    background: #35373a;
  }

  .slot {
    display: flex;
    align-items: center;
    gap: 4px;
    height: 8px;
    padding: 0 2px;
    border: 1px solid #2b4a5e;
    background: #5c7482;
    color: #15191d;
    font-size: 6px;
  }

  .slot.lit {
    background: #7fa2b8;
  }

  .slot.faint {
    color: #42545f;
  }

  .slot.off {
    color: #2a363e;
  }

  .slot b {
    flex: 1;
  }

  .level {
    margin: 0 3px 4px;
    background: #313336;
  }

  .readout {
    display: flex;
    gap: 4px;
    padding: 4px 0 2px 21px;
    font-size: 6px;
  }

  .readout span:nth-child(n + 3) {
    width: 12px;
    text-align: center;
  }

  .faders {
    position: relative;
    display: flex;
    justify-content: center;
    margin: 0 2px;
    border-radius: 2px;
    background: #191c1f;
  }

  .faders text {
    fill: #94979a;
    font-size: 4px;
  }

  .faders .end {
    text-anchor: end;
  }

  .sliders {
    position: absolute;
    top: 9px;
    left: 50%;
    display: flex;
    gap: 5px;
    margin-left: -23px;
  }

  input[type="range"] {
    appearance: none;
    writing-mode: vertical-lr;
    direction: rtl;
    width: 8px;
    height: 110px;
  }

  input[type="range"]::-webkit-slider-thumb {
    appearance: none;
    width: 8px;
    height: 15px;
    background: linear-gradient(#aeb3b8, #fff 45%, #33373c 45% 55%, #fff 55%, #9da2a7);
  }

  .level-buttons {
    display: flex;
    justify-content: center;
    gap: 10px;
    padding: 3px 0;
  }

  .level-buttons .blue {
    background: #2c9fe2;
  }

  h3.bar + h3.bar {
    margin-top: 5px;
  }

  .render {
    align-self: center;
    margin: 4px 0 2px;
    padding: 0 4px;
  }
</style>
